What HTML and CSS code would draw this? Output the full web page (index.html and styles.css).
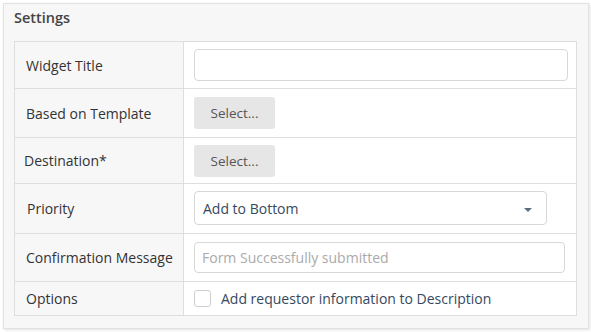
FILE: index.html
```
<!DOCTYPE html>
<html lang="en">
<head>
    <meta charset="UTF-8">
    <meta name="viewport" content="width=device-width, initial-scale=1.0">
    <title>Settings</title>
    <link rel="stylesheet" href="styles.css">
</head>
<body>
    <section class="panel">
        <h2 class="panel-title">Settings</h2>
        <div class="settings">
            <div class="row row-1">
                <div class="label">Widget Title</div>
                <div class="value"><input type="text" class="text-input title-input"></div>
            </div>
            <div class="row row-2">
                <div class="label">Based on Template</div>
                <div class="value"><button class="select-btn">Select...</button></div>
            </div>
            <div class="row row-3">
                <div class="label label-tight">Destination*</div>
                <div class="value"><button class="select-btn">Select...</button></div>
            </div>
            <div class="row row-4">
                <div class="label label-indent">Priority</div>
                <div class="value">
                    <div class="dropdown">
                        <span>Add to Bottom</span>
                        <span class="caret"></span>
                    </div>
                </div>
            </div>
            <div class="row row-5">
                <div class="label">Confirmation Message</div>
                <div class="value"><input type="text" class="text-input confirm-input" placeholder="Form Successfully submitted"></div>
            </div>
            <div class="row row-6">
                <div class="label">Options</div>
                <div class="value">
                    <label class="option">
                        <span class="checkbox"></span>
                        Add requestor information to Description
                    </label>
                </div>
            </div>
        </div>
    </section>
</body>
</html>
```
FILE: styles.css
```
body {
    font-family: "Open Sans", Arial, sans-serif;
    margin: 0;
    padding: 3px;
    background-color: #ffffff;
}
.panel {
    box-sizing: border-box;
    width: 586px;
    height: 326px;
    background-color: #f7f7f7;
    border: 1px solid #e2e2e2;
    box-shadow: 1px 1px 3px rgba(0, 0, 0, 0.12);
    padding: 0 10px;
}
.panel-title {
    margin: 0;
    padding: 4px 0 0 0;
    height: 37px;
    box-sizing: border-box;
    font-size: 14.5px;
    font-weight: 600;
    color: #444;
}
.settings {
    width: 561px;
    border: 1px solid #dedede;
    border-bottom: none;
    font-size: 14px;
    color: #333;
}
.row {
    display: flex;
    box-sizing: border-box;
    border-bottom: 1px solid #dedede;
}
.row-1 { height: 47px; }
.row-2 { height: 49px; }
.row-3 { height: 46px; }
.row-4 { height: 50px; }
.row-5 { height: 48px; }
.row-6 { height: 34px; }
.label {
    width: 169px;
    flex-shrink: 0;
    display: flex;
    align-items: center;
    padding-left: 11px;
    box-sizing: border-box;
    border-right: 1px solid #dedede;
    background-color: #f7f7f7;
}
.label-tight {
    padding-left: 9px;
}
.label-indent {
    padding-left: 12px;
}
.value {
    flex: 1;
    display: flex;
    align-items: center;
    background-color: #fff;
    padding-left: 10px;
}
.text-input {
    display: block;
    box-sizing: border-box;
    border: 1px solid #d8d8d8;
    border-radius: 4px;
    font-family: inherit;
    font-size: 14px;
    padding: 0 7px;
    outline: none;
}
.title-input {
    width: 374px;
    height: 32px;
}
.confirm-input {
    width: 371px;
    height: 31px;
}
.confirm-input::placeholder {
    color: #aaa;
}
.select-btn {
    display: block;
    width: 81px;
    height: 32px;
    background-color: #e6e6e6;
    border: none;
    border-radius: 3px;
    font-family: inherit;
    font-size: 13.5px;
    color: #555;
    padding: 0;
}
.dropdown {
    width: 353px;
    height: 34px;
    box-sizing: border-box;
    border: 1px solid #d8d8d8;
    border-radius: 4px;
    display: flex;
    align-items: center;
    justify-content: space-between;
    padding: 0 14px 0 8px;
    color: #34495e;
    margin-top: -1px;
}
.caret {
    width: 0;
    height: 0;
    border-left: 4px solid transparent;
    border-right: 4px solid transparent;
    border-top: 4px solid #5b6b7c;
    margin-top: 3px;
}
.option {
    display: flex;
    align-items: center;
    gap: 10px;
    color: #34495e;
}
.checkbox {
    width: 17px;
    height: 17px;
    box-sizing: border-box;
    border: 1px solid #cfcfcf;
    border-radius: 3px;
    background: #fff;
}
```
